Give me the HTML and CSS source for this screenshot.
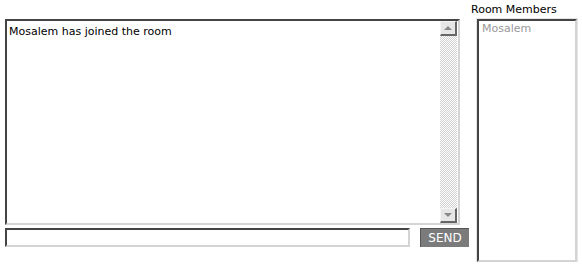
FILE: index.html
```html
<!DOCTYPE html>
<html>
<head>
<meta charset="utf-8">
<link rel="stylesheet" href="styles.css">
</head>
<body>
<div class="page">
  <div class="chat-col">
    <div class="chat-box">
      <div class="log">Mosalem has joined the room</div>
      <div class="scrollbar">
        <div class="sb-btn"><span class="tri up"></span></div>
        <div class="sb-track"></div>
        <div class="sb-btn"><span class="tri down"></span></div>
      </div>
    </div>
    <div class="send-row">
      <div class="msg-input"></div>
      <div class="send-btn">SEND</div>
    </div>
  </div>
  <div class="members-col">
    <div class="members-label">Room Members</div>
    <div class="members-box">Mosalem</div>
  </div>
</div>
</body>
</html>
```
FILE: styles.css
```css
html, body {
  margin: 0;
  padding: 0;
  background: #ffffff;
}
body {
  font-family: "DejaVu Sans", Verdana, sans-serif;
  font-size: 11px;
  color: #000;
}
.page {
  display: flex;
  padding: 4px 0 0 5px;
}
.chat-col {
  width: 465px;
  padding-top: 15px;
  display: flex;
  flex-direction: column;
}
.chat-box {
  width: 451px;
  height: 202px;
  border-style: solid;
  border-width: 2px;
  border-color: #444 #d4d4d4 #d4d4d4 #444;
  display: flex;
}
.log {
  flex: 1;
  padding: 4px 2px 3px 2px;
  line-height: 14px;
}
.scrollbar {
  width: 17px;
  display: flex;
  flex-direction: column;
  margin: 0 1px 0 0;
}
.sb-btn {
  height: 12px;
  background: #e6e6e6;
  border-style: solid;
  border-width: 1px 2px 2px 1px;
  border-color: #f4f4f4 #666 #666 #f4f4f4;
  display: flex;
  align-items: center;
  justify-content: center;
}
.sb-track {
  flex: 1;
  background-color: #fff;
  background-image: repeating-conic-gradient(#d0d0d0 0 25%, #ffffff 0 50%);
  background-size: 2px 2px;
}
.tri {
  width: 0;
  height: 0;
  border-left: 4px solid transparent;
  border-right: 4px solid transparent;
}
.tri.up { border-bottom: 4px solid #888; }
.tri.down { border-top: 4px solid #888; }
.send-row {
  display: flex;
  margin-top: 3px;
  align-items: flex-start;
}
.msg-input {
  width: 401px;
  height: 15px;
  border-style: solid;
  border-width: 2px;
  border-color: #444 #d4d4d4 #d4d4d4 #444;
}
.send-btn {
  margin-left: 10px;
  width: 49px;
  height: 19px;
  background: #7b7b7b;
  color: #fff;
  font-size: 12px;
  line-height: 19px;
  text-align: center;
  border-top: 1px solid #555;
  border-left: 1px solid #555;
  box-sizing: border-box;
}
.members-col {
  display: flex;
  flex-direction: column;
  padding-left: 1px;
}
.members-label {
  font-size: 11px;
  line-height: 12px;
  height: 15px;
}
.members-box {
  margin-left: 6px;
  width: 100px;
  height: 243px;
  border-style: solid;
  border-width: 2px;
  border-color: #444 #d4d4d4 #d4d4d4 #444;
  outline: 1px solid #e4e4e4;
  color: #999;
  padding: 1px 3px;
  box-sizing: border-box;
  line-height: 14px;
}
```
